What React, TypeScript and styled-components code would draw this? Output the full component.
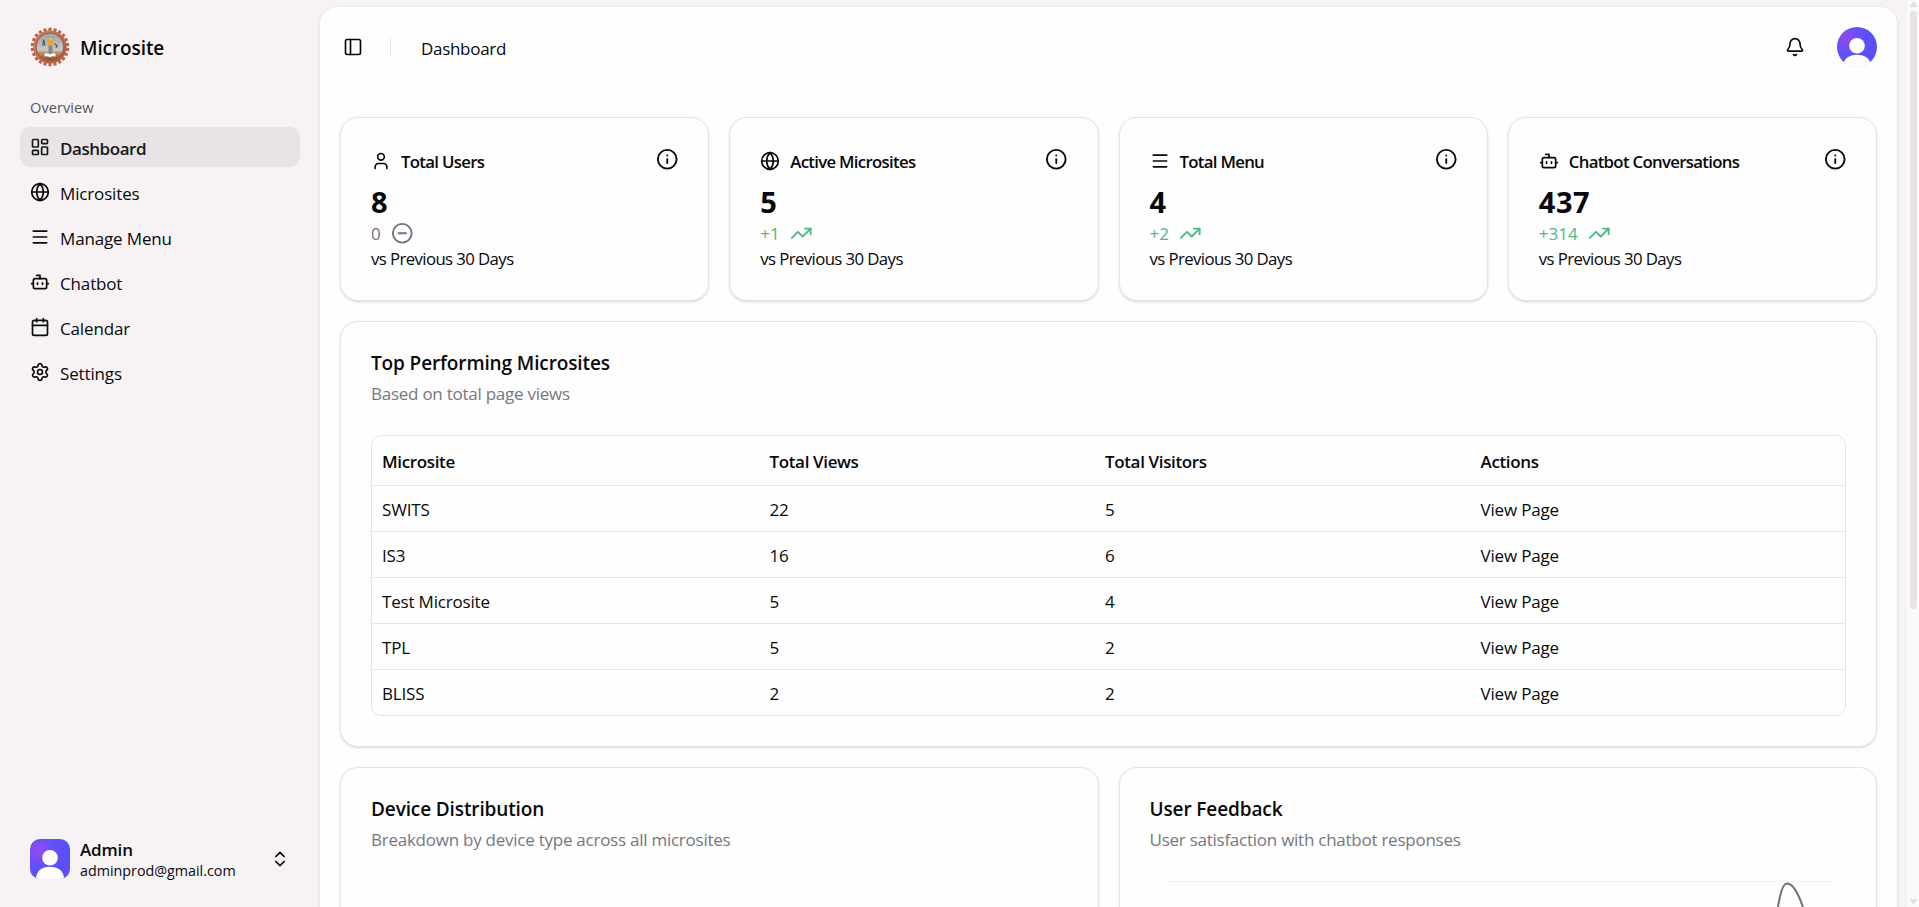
import React from "react";
import styled, { createGlobalStyle, css } from "styled-components";
import {
  Bell, Bot, Calendar, ChevronsUpDown, CircleMinus, Globe, Info, LayoutDashboard,
  Menu, PanelLeft, Settings, TrendingUp, User, type LucideIcon,
} from "lucide-react";

const GlobalStyle = createGlobalStyle`
  *, *::before, *::after { box-sizing: border-box; }
  html, body { margin: 0; height: 100%; overflow: hidden; }
  body {
    background: #f7f3f5;
    color: #09090b;
    font-family: "Open Sans", "Noto Sans", sans-serif;
    font-size: 17px;
    line-height: 25px;
  }
  p, h1, h2, h3 { margin: 0; font: inherit; }
`;

const Page = styled.div`
  display: flex;
  height: 907px;
  overflow: hidden;
`;

const Sidebar = styled.aside`
  width: 320px;
  flex: none;
  display: flex;
  flex-direction: column;
  padding: 27px 20px 18px;
`;

const Brand = styled.div`
  display: flex;
  align-items: center;
  gap: 10px;
  height: 40px;
  padding-left: 10px;
`;

const BrandName = styled.span`
  font-size: 19px;
  font-weight: 600;
  padding-top: 2px;
  letter-spacing: -0.1px;
`;

const GroupLabel = styled.div`
  height: 40px;
  margin-top: 20px;
  padding: 0 10px;
  line-height: 41px;
  font-size: 14.6px;
  font-weight: 500;
  letter-spacing: 0.05px;
  color: #56555a;
`;

const Nav = styled.nav`
  display: flex;
  flex-direction: column;
  gap: 5px;
`;

const NavItem = styled.a<{ $active?: boolean }>`
  display: flex;
  align-items: center;
  gap: 10px;
  height: 40px;
  padding: 0 10px;
  border-radius: 10px;
  letter-spacing: -0.15px;
  svg { width: 20px; height: 20px; margin-top: -1px; flex: none; }
  span { padding-top: 2px; }
  ${(p) => p.$active && css`
    background: #e7e3e7;
    color: #18181b;
    font-weight: 600;
    letter-spacing: -0.45px;
  `}
`;

const Account = styled.div`
  display: flex;
  align-items: center;
  gap: 10px;
  height: 60px;
  margin-top: auto;
  padding: 0 10px;
  > svg:last-child { margin-left: auto; }
`;

const AccountText = styled.div`
  display: flex;
  flex-direction: column;
  padding-top: 2px;
  line-height: 21px;
`;

const AccountName = styled.span`
  font-weight: 600;
  letter-spacing: -0.15px;
`;

const AccountMail = styled.span`
  font-size: 14.3px;
`;

const Main = styled.main`
  width: 1577px;
  flex: none;
  height: 1500px;
  margin-top: 7px;
  padding: 0 20px;
  background: #fefefe;
  border-radius: 17px;
  box-shadow: 0 1px 4px rgba(0, 0, 0, 0.12);
`;

const Header = styled.header`
  display: flex;
  align-items: center;
  height: 80px;
  padding-left: 3px;
`;

const Divider = styled.span`
  width: 1px;
  height: 20px;
  margin: 0 30px 0 27px;
  background: #e7e3e7;
`;

const Crumb = styled.span`
  padding-top: 2px;
  letter-spacing: -0.3px;
`;

const HeaderActions = styled.div`
  display: flex;
  align-items: center;
  gap: 32px;
  margin-left: auto;
`;

const Stats = styled.section`
  display: grid;
  grid-template-columns: repeat(4, 1fr);
  gap: 20px;
  margin-top: 30px;
`;

const Card = styled.article<{ $height: number }>`
  height: ${(p) => p.$height}px;
  padding: 30px;
  border: 1px solid #e4e4e7;
  border-radius: 18px;
  background: #fefefe;
  box-shadow: 0 1px 3px rgba(0, 0, 0, 0.11), 0 1px 2px -1px rgba(0, 0, 0, 0.12);
`;

const StatHead = styled.div`
  display: flex;
  align-items: center;
  height: 25px;
  gap: 10px;
`;

const StatTitle = styled.h3`
  font-size: 16.8px;
  font-weight: 600;
  letter-spacing: -0.7px;
  padding-top: 1px;
`;

const InfoSlot = styled.span`
  display: flex;
  margin: -2.5px -0.3px 0 auto;
`;

const StatValue = styled.p`
  height: 35px;
  margin-top: 10px;
  font-size: 29px;
  line-height: 38px;
  font-weight: 700;
  letter-spacing: 0.6px;
`;

const Delta = styled.p<{ $up: boolean }>`
  display: flex;
  align-items: center;
  gap: 10px;
  height: 25px;
  margin-top: 2px;
  padding-top: 1px;
  font-weight: 500;
  color: ${(p) => (p.$up ? "#4fb883" : "#71717f")};
`;

const StatNote = styled.p`
  padding-top: 1px;
  font-size: 16.8px;
  letter-spacing: -0.6px;
`;

const SectionTitle = styled.h2`
  height: 25px;
  font-size: 19px;
  font-weight: 600;
  line-height: 23px;
  letter-spacing: -0.12px;
`;

const SectionSub = styled.p`
  margin-top: 5px;
  height: 25px;
  line-height: 23px;
  color: #77767e;
  letter-spacing: -0.25px;
`;

const Panel = styled.section`
  margin-top: 20px;
`;

const Table = styled.div`
  margin-top: 28px;
  border: 1px solid #e4e4e7;
  border-radius: 10px;
  overflow: hidden;
`;

const Row = styled.div<{ $head?: boolean }>`
  display: grid;
  grid-template-columns: 387.5px 335.5px 375.5px 1fr;
  align-items: center;
  height: ${(p) => (p.$head ? 49 : 46)}px;
  padding-top: ${(p) => (p.$head ? 1 : 2)}px;
  font-weight: ${(p) => (p.$head ? 600 : 400)};
  letter-spacing: ${(p) => (p.$head ? -0.36 : -0.18)}px;
  & + & { border-top: 1px solid #e4e4e7; }
  > span { padding-left: 10px; }
`;

const Split = styled.section`
  display: grid;
  grid-template-columns: 1fr 1fr;
  gap: 20px;
  margin-top: 20px;
`;

const Chart = styled.svg`
  display: block;
  width: 100%;
  height: 300px;
  margin-top: 18px;
`;

const Scrollbar = styled.div`
  display: flex;
  flex-direction: column;
  align-items: center;
  width: 12px;
  margin-left: auto;
  padding: 1px 0 2px 1px;
  background: #fbfafb;
`;

const Thumb = styled.span`
  width: 7px;
  height: 598px;
  margin: 4px 0 auto;
  border-radius: 4px;
  background: #e7e3e7;
`;

const Avatar = ({ round, id }: { round?: boolean; id: string }) => (
  <svg width="40" height="40" viewBox="0 0 40 40">
    <defs>
      <radialGradient id={id} cx="0.22" cy="0.28" r="0.7">
        <stop offset="0" stopColor="#9649ee" />
        <stop offset="0.55" stopColor="#6052f6" />
        <stop offset="1" stopColor="#5a50f6" />
      </radialGradient>
      <clipPath id={`${id}-clip`}>
        <rect width="40" height="40" rx={round ? 20 : 10} />
      </clipPath>
    </defs>
    <g clipPath={`url(#${id}-clip)`}>
      <rect width="40" height="40" fill={`url(#${id})`} />
      <circle cx="20" cy="18.7" r="7.8" fill="#fff" />
      <path d="M6 40C6 32 12 27.8 20 27.8S34 32 34 40Z" fill="#fff" />
      {round && <path d="M0 34.8h40V40H0Z" fill="#fefefe" />}
    </g>
  </svg>
);

const teeth = Array.from({ length: 22 }, (_, i) => (i * 360) / 22);

const GearLogo = () => (
  <svg width="40" height="40" viewBox="0 0 40 40">
    <defs>
      <linearGradient id="sky" x1="0" y1="0" x2="0" y2="1">
        <stop offset="0" stopColor="#a3a6a6" />
        <stop offset="0.62" stopColor="#c6c7c5" />
        <stop offset="0.74" stopColor="#b9855c" />
        <stop offset="1" stopColor="#95482a" />
      </linearGradient>
      <linearGradient id="copper" x1="0" y1="0" x2="1" y2="1">
        <stop offset="0" stopColor="#cd8468" />
        <stop offset="1" stopColor="#ad5a3f" />
      </linearGradient>
    </defs>
    {teeth.map((a) => (
      <rect key={a} x="18.4" y="0.7" width="3.2" height="5" rx="0.6" fill="#b96a4b" transform={`rotate(${a} 20 20)`} />
    ))}
    <circle cx="20" cy="20" r="16.6" fill="url(#copper)" />
    <circle cx="20" cy="20" r="14" fill="none" stroke="#8f5040" strokeWidth="0.8" />
    <circle cx="20" cy="20" r="13.2" fill="url(#sky)" />
    <path d="M15.5 10.3h9" stroke="#83a796" strokeWidth="0.8" />
    <path d="M13 19l.6-6.5 1.4 6" stroke="#4b4d50" strokeWidth="1.1" fill="none" />
    <path d="M24.5 16.5l2.8 2.5-1.5 1.5" stroke="#55585a" strokeWidth="1.3" fill="none" />
    <ellipse cx="20.5" cy="15" rx="3" ry="3.6" fill="#eba23a" />
    <circle cx="20.8" cy="12" r="1.4" fill="#f4c13c" />
    <path d="M18.5 18.5h4v8.5h-4Z" fill="#858787" />
    <path d="M8.5 25h6v2.5h-4ZM25.5 25h6l-1.5 2.5h-4.5Z" fill="#d08a4c" />
    <path d="M14.5 26.8q3-1.2 5.5.8 2.5-2 5.5-.8v2.7q-3-.8-5.5.7-2.5-1.5-5.5-.7Z" fill="#fff" />
  </svg>
);

const navItems: { label: string; icon: LucideIcon }[] = [
  { label: "Dashboard", icon: LayoutDashboard },
  { label: "Microsites", icon: Globe },
  { label: "Manage Menu", icon: Menu },
  { label: "Chatbot", icon: Bot },
  { label: "Calendar", icon: Calendar },
  { label: "Settings", icon: Settings },
];

const stats: { label: string; icon: LucideIcon; value: string; delta: string; up: boolean }[] = [
  { label: "Total Users", icon: User, value: "8", delta: "0", up: false },
  { label: "Active Microsites", icon: Globe, value: "5", delta: "+1", up: true },
  { label: "Total Menu", icon: Menu, value: "4", delta: "+2", up: true },
  { label: "Chatbot Conversations", icon: Bot, value: "437", delta: "+314", up: true },
];

const microsites = [
  ["SWITS", "22", "5"],
  ["IS3", "16", "6"],
  ["Test Microsite", "5", "4"],
  ["TPL", "5", "2"],
  ["BLISS", "2", "2"],
];

export default function App() {
  return (
    <>
      <GlobalStyle />
      <Page>
        <Sidebar>
          <Brand>
            <GearLogo />
            <BrandName>Microsite</BrandName>
          </Brand>
          <GroupLabel>Overview</GroupLabel>
          <Nav>
            {navItems.map(({ label, icon: Icon }, i) => (
              <NavItem key={label} $active={i === 0}>
                <Icon />
                <span>{label}</span>
              </NavItem>
            ))}
          </Nav>
          <Account>
            <Avatar id="account" />
            <AccountText>
              <AccountName>Admin</AccountName>
              <AccountMail>adminprod@gmail.com</AccountMail>
            </AccountText>
            <ChevronsUpDown size={20} />
          </Account>
        </Sidebar>
        <Main>
          <Header>
            <PanelLeft size={20} />
            <Divider />
            <Crumb>Dashboard</Crumb>
            <HeaderActions>
              <Bell size={20} />
              <Avatar id="profile" round />
            </HeaderActions>
          </Header>
          <Stats>
            {stats.map(({ label, icon: Icon, value, delta, up }) => (
              <Card key={label} $height={184}>
                <StatHead>
                  <Icon size={20} />
                  <StatTitle>{label}</StatTitle>
                  <InfoSlot><Info size={22.5} /></InfoSlot>
                </StatHead>
                <StatValue>{value}</StatValue>
                <Delta $up={up}>
                  {delta}
                  {up ? <TrendingUp size={22.5} /> : <CircleMinus size={22.5} />}
                </Delta>
                <StatNote>vs Previous 30 Days</StatNote>
              </Card>
            ))}
          </Stats>
          <Panel>
            <Card $height={426}>
              <SectionTitle>Top Performing Microsites</SectionTitle>
              <SectionSub>Based on total page views</SectionSub>
              <Table>
                <Row $head>
                  <span>Microsite</span>
                  <span>Total Views</span>
                  <span>Total Visitors</span>
                  <span>Actions</span>
                </Row>
                {microsites.map(([name, views, visitors]) => (
                  <Row key={name}>
                    <span>{name}</span>
                    <span>{views}</span>
                    <span>{visitors}</span>
                    <span>View Page</span>
                  </Row>
                ))}
              </Table>
            </Card>
          </Panel>
          <Split>
            <Card $height={500}>
              <SectionTitle>Device Distribution</SectionTitle>
              <SectionSub>Breakdown by device type across all microsites</SectionSub>
            </Card>
            <Card $height={500}>
              <SectionTitle>User Feedback</SectionTitle>
              <SectionSub>User satisfaction with chatbot responses</SectionSub>
              <Chart>
                <path d="M16 10.5H682" stroke="#f3f3f4" fill="none" />
                <path d="M621 80C626 60 628 12.5 637 12.5C646 12.5 655 36 661 70" stroke="#71717f" strokeWidth="2" fill="none" />
              </Chart>
            </Card>
          </Split>
        </Main>
        <Scrollbar>
          <svg width="9" height="6" viewBox="0 0 9 6"><path d="M4.5 0 8.5 6h-8Z" fill="#e1dde1" /></svg>
          <Thumb />
          <svg width="9" height="6" viewBox="0 0 9 6"><path d="M4.5 6 8.5 0h-8Z" fill="#e1dde1" /></svg>
        </Scrollbar>
      </Page>
    </>
  );
}
